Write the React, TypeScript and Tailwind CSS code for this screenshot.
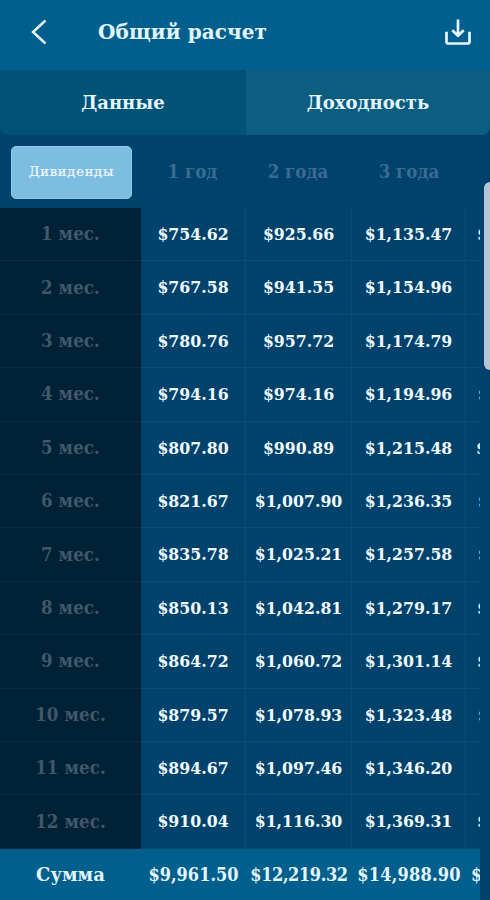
import React from "react";

// The fourth year's column only peeks in at the edge of the scrolled table.
const months: { label: string; values: [string, string, string]; peek?: string }[] = [
  { label: "1 мес.", values: ["$754.62", "$925.66", "$1,135.47"], peek: "pl-[11px]" },
  { label: "2 мес.", values: ["$767.58", "$941.55", "$1,154.96"] },
  { label: "3 мес.", values: ["$780.76", "$957.72", "$1,174.79"] },
  { label: "4 мес.", values: ["$794.16", "$974.16", "$1,194.96"], peek: "pl-[12px]" },
  { label: "5 мес.", values: ["$807.80", "$990.89", "$1,215.48"], peek: "pl-[10px]" },
  { label: "6 мес.", values: ["$821.67", "$1,007.90", "$1,236.35"], peek: "pl-[12px]" },
  { label: "7 мес.", values: ["$835.78", "$1,025.21", "$1,257.58"], peek: "pl-[12px]" },
  { label: "8 мес.", values: ["$850.13", "$1,042.81", "$1,279.17"], peek: "pl-[11px]" },
  { label: "9 мес.", values: ["$864.72", "$1,060.72", "$1,301.14"], peek: "pl-[11px]" },
  { label: "10 мес.", values: ["$879.57", "$1,078.93", "$1,323.48"], peek: "pl-[12px]" },
  { label: "11 мес.", values: ["$894.67", "$1,097.46", "$1,346.20"] },
  { label: "12 мес.", values: ["$910.04", "$1,116.30", "$1,369.31"], peek: "pl-[11px]" },
];

const columns = "grid grid-cols-[141px_105px_106px_114px_14px]";
const cell = "flex items-center justify-center whitespace-nowrap";
const wide = "font-['DejaVu_Serif',serif] [font-stretch:normal]";

export default function App() {
  return (
    <div className="flex h-[900px] w-[490px] flex-col overflow-hidden bg-[#00426c] font-['DejaVu_Serif_Condensed','DejaVu_Serif',serif] font-bold [font-stretch:condensed] text-[#e4f6ff]">
      <header className="flex h-[70px] shrink-0 items-center bg-[#005f8d] pb-[6px]">
        <svg className="ml-[30px] h-[28px] w-[18px]" viewBox="0 0 18 28" fill="none" stroke="#e8f7ff" strokeWidth="2.4">
          <path d="M15.5 2.5 3 14l12.500 11.500" />
        </svg>
        <h1 className={`${wide} ml-[50px] flex-1 text-[20px] leading-none tracking-[0.1px] font-bold`}>Общий расчет</h1>
        <svg className="mr-[18px] h-[28px] w-[28px]" viewBox="0 0 28 28" fill="none" stroke="#e8f7ff" strokeWidth="2.700" strokeLinejoin="round">
          <path d="M2.500 13.800v9.700q0 2 2 2h19q2 0 2-2v-9.700M14 1.500v15M8.300 12.200l5.700 5.600 5.700-5.600" />
        </svg>
      </header>
      <nav className={`${wide} grid h-[65px] shrink-0 grid-cols-[246px_244px] overflow-hidden rounded-b-[8px] text-[18px] font-bold`}>
        <div className="flex items-center justify-center bg-[#005377]">Данные</div>
        <div className="flex items-center justify-center bg-[#0d5d80]">Доходность</div>
      </nav>
      <div className="relative flex-1">
        <div className="w-[480px] overflow-hidden">
          <div className={`${columns} h-[73px] text-[18.5px] text-[#3a6c93]`}>
            <div className="py-[11px] pr-[9px] pl-[11px]">
              <div className={`${wide} flex h-[53px] items-center justify-center rounded-[5px] border border-[#91c8e9] bg-[#7ebde2] pb-[2px] text-[13px] font-normal tracking-[0.8px] text-[#f2fbff] [-webkit-text-stroke:0.2px]`}>Дивиденды</div>
            </div>
            <div className={`${cell} pr-[2px] pb-[2px]`}>1 год</div>
            <div className={`${cell} pr-[2px] pb-[2px]`}>2 года</div>
            <div className={`${cell} pb-[2px]`}>3 года</div>
          </div>
          {months.map((m) => (
            <div key={m.label} className={`${columns} h-[53.4px] text-[17.5px]`}>
              <div className={`${cell} border-b border-[#0b2d42] bg-[#002136] text-[18.5px] tracking-[0.1px] text-[#405869]`}>{m.label}</div>
              {m.values.map((v) => (
                <div key={v} className={`${cell} border-r border-b border-[#0a4c75] text-[#f1fbff]`}>{v}</div>
              ))}
              <div className={`flex items-center overflow-hidden border-b border-[#0a4c75] ${m.peek ?? ""}`}>{m.peek ? "$" : null}</div>
            </div>
          ))}
          <div className={`${columns} h-[52px] bg-[#005f8d] text-[18px]`}>
            <div className={`${wide} ${cell} text-[18px]`}>Сумма</div>
            <div className={cell}>$9,961.50</div>
            <div className={`${cell} tracking-[-0.4px]`}>$12,219.32</div>
            <div className={`${cell} tracking-[0.2px]`}>$14,988.90</div>
            <div className="flex items-center overflow-hidden pl-[5px]">$</div>
          </div>
        </div>
        <div className="absolute top-[47px] right-0 h-[188px] w-[6px] rounded-l-[6px] bg-[#b4c6d8]" />
      </div>
    </div>
  );
}
